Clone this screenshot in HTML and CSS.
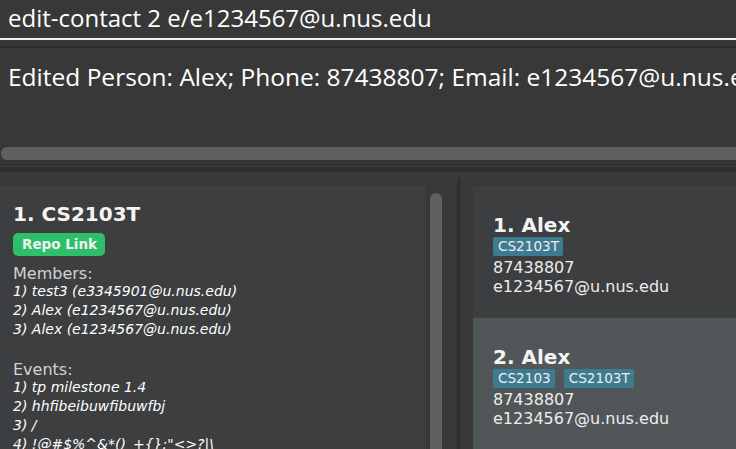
FILE: index.html
```html
<!DOCTYPE html>
<html>
<head>
<meta charset="utf-8">
<link rel="stylesheet" href="styles.css">
</head>
<body>
<div class="app">
  <div class="command">edit-contact 2 e/e1234567@u.nus.edu</div>
  <div class="sep-a"></div>
  <div class="result">
    <div class="result-text">Edited Person: Alex; Phone: 87438807; Email: e1234567@u.nus.edu</div>
    <div class="hscroll"></div>
  </div>
  <div class="sep-b"></div>
  <div class="panes">
    <div class="pane-left">
      <div class="group-card">
        <div class="big-label">1. CS2103T</div>
        <div class="repo-row"><span class="repo">Repo Link</span></div>
        <div class="section-label">Members:</div>
        <div class="item">1) test3 (e3345901@u.nus.edu)</div>
        <div class="item">2) Alex (e1234567@u.nus.edu)</div>
        <div class="item">3) Alex (e1234567@u.nus.edu)</div>
        <div class="item blank"></div>
        <div class="section-label">Events:</div>
        <div class="item">1) tp milestone 1.4</div>
        <div class="item">2) hhfibeibuwfibuwfbj</div>
        <div class="item">3) /</div>
        <div class="item">4) !@#$%^&amp;*()_+{}:"&lt;&gt;?|\</div>
      </div>
      <div class="vtrack"><div class="vthumb"></div></div>
    </div>
    <div class="divider"></div>
    <div class="pane-right">
      <div class="person-card">
        <div class="big-label">1. Alex</div>
        <div class="tags"><span class="tag">CS2103T</span></div>
        <div class="small-label">87438807</div>
        <div class="small-label">e1234567@u.nus.edu</div>
      </div>
      <div class="person-card odd">
        <div class="big-label">2. Alex</div>
        <div class="tags"><span class="tag">CS2103</span><span class="tag">CS2103T</span></div>
        <div class="small-label">87438807</div>
        <div class="small-label">e1234567@u.nus.edu</div>
      </div>
    </div>
  </div>
</div>
</body>
</html>
```

FILE: styles.css
```css
html, body {
  margin: 0;
  padding: 0;
  background: #383838;
  overflow: hidden;
}
.app {
  width: 736px;
  height: 449px;
  display: flex;
  flex-direction: column;
  overflow: hidden;
  background: #383838;
}
.command {
  height: 38px;
  line-height: 36px;
  padding-left: 8px;
  font-family: "Open Sans", sans-serif;
  font-size: 24px;
  color: #ffffff;
  border-bottom: 2px solid #f2f2f2;
  white-space: nowrap;
  flex: none;
}
.sep-a {
  height: 6px;
  background: #383838;
  border-bottom: 2px solid #2d2d2d;
  flex: none;
}
.result {
  flex: none;
  height: 112px;
  display: flex;
  flex-direction: column;
  justify-content: space-between;
  overflow: hidden;
}
.result-text {
  padding: 13px 0 0 8px;
  font-family: "Open Sans", sans-serif;
  font-size: 24.5px;
  line-height: 32px;
  color: #ffffff;
  white-space: nowrap;
}
.hscroll {
  height: 13px;
  margin: 0 0 0 1px;
  width: 760px;
  background: #5f5f5f;
  border-radius: 6px;
}
.sep-b {
  flex: none;
  height: 4px;
  background: #353535;
  border-bottom: 1px solid #2b2b2b;
  box-shadow: 0 7px 0 0 #2e2e2e;
  margin-bottom: 8px;
}
.panes {
  flex: 1;
  display: flex;
  min-height: 0;
  padding-top: 5px;
}
.pane-left {
  width: 458px;
  flex: none;
  display: flex;
  padding-top: 8px;
  box-sizing: border-box;
}
.group-card {
  width: 426px;
  flex: none;
  background: #3c3e40;
  padding: 16px 13px 0;
  box-sizing: border-box;
  font-family: "DejaVu Sans", sans-serif;
  color: #ffffff;
}
.big-label {
  font-family: "DejaVu Sans", sans-serif;
  font-weight: bold;
  font-size: 20px;
  line-height: 24px;
  color: #f4f4f4;
}
.repo-row {
  margin-top: 7px;
  display: flex;
}
.repo {
  display: inline-block;
  height: 23px;
  line-height: 23px;
  padding: 0 8px 0 9px;
  border-radius: 5px;
  background: #2ebf6b;
  color: #f2f2f2;
  font-weight: bold;
  font-size: 13.5px;
}
.section-label {
  margin-top: 9px;
  font-size: 16px;
  line-height: 17px;
  color: #d2d2d2;
}
.item {
  font-size: 14px;
  font-style: italic;
  line-height: 19px;
  color: #ffffff;
  white-space: nowrap;
}
.item.blank {
  height: 19px;
}
.group-card .item + .section-label {
  margin-top: 3px;
}
.vtrack {
  flex: 1;
  display: flex;
  padding: 7px 0 0 4px;
  border-right: 2px solid #323232;
  background: #383838;
}
.vthumb {
  width: 12px;
  background: #5f5f5f;
  border-radius: 6px 6px 0 0;
}
.divider {
  width: 2px;
  flex: none;
  background: #2b2b2b;
}
.pane-right {
  flex: 1;
  padding: 8px 0 0 13px;
  display: flex;
  flex-direction: column;
}
.person-card {
  height: 132px;
  box-sizing: border-box;
  padding: 27px 20px 0;
  background: #3c3e40;
  font-family: "DejaVu Sans", sans-serif;
  flex: none;
}
.person-card.odd {
  background: #515658;
}
.tags {
  display: flex;
  gap: 9px;
  height: 19px;
}
.tag {
  height: 19px;
  line-height: 19px;
  padding: 0 4px 0 5px;
  background: #3e7b91;
  color: #ececec;
  font-size: 13.6px;
  border-radius: 2px;
}
.small-label {
  font-size: 16px;
  line-height: 19px;
  color: #ededed;
  white-space: nowrap;
}
.tags + .small-label {
  margin-top: 2px;
}
```
